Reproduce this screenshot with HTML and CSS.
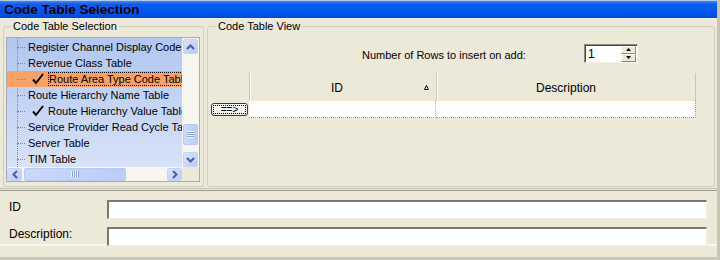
FILE: index.html
```html
<!DOCTYPE html>
<html lang="en">
<head>
    <meta charset="UTF-8">
    <title>Code Table Selection</title>
    <link rel="stylesheet" href="styles.css">
</head>
<body>
<div class="window">
    <div class="titlebar">Code Table Selection</div>

    <div class="main">
        <!-- left: table picker -->
        <fieldset class="group group-left">
            <legend>Code Table Selection</legend>
            <div class="tree">
                <div class="tree-body">
                    <ul class="tree-items">
                        <li>Register Channel Display Code Table</li>
                        <li>Revenue Class Table</li>
                        <li class="checked selected"><span class="check"><svg width="12" height="12" viewBox="0 0 12 12"><path d="M1 6.5 L4 10 L11 1" fill="none" stroke="#000" stroke-width="2"/></svg></span><span class="focus">Route Area Type Code Table</span></li>
                        <li>Route Hierarchy Name Table</li>
                        <li class="checked"><span class="check"><svg width="12" height="12" viewBox="0 0 12 12"><path d="M1 6.5 L4 10 L11 1" fill="none" stroke="#000" stroke-width="2"/></svg></span><span>Route Hierarchy Value Table</span></li>
                        <li>Service Provider Read Cycle Table</li>
                        <li>Server Table</li>
                        <li>TIM Table</li>
                    </ul>
                    <div class="vscroll">
                        <div class="sb-btn"><svg width="9" height="6" viewBox="0 0 9 6"><path d="M1 5 L4.5 1.5 L8 5" fill="none" stroke="#4d6185" stroke-width="2"/></svg></div>
                        <div class="sb-track sb-track-v">
                            <div class="sb-thumb sb-thumb-v"><span class="grip grip-v"></span></div>
                        </div>
                        <div class="sb-btn"><svg width="9" height="6" viewBox="0 0 9 6"><path d="M1 1 L4.5 4.5 L8 1" fill="none" stroke="#4d6185" stroke-width="2"/></svg></div>
                    </div>
                </div>
                <div class="hscroll-row">
                    <div class="hscroll">
                        <div class="sb-btn"><svg width="6" height="9" viewBox="0 0 6 9"><path d="M5 1 L1.5 4.5 L5 8" fill="none" stroke="#4d6185" stroke-width="2"/></svg></div>
                        <div class="sb-track sb-track-h">
                            <div class="sb-thumb sb-thumb-h"><span class="grip grip-h"></span></div>
                        </div>
                        <div class="sb-btn"><svg width="6" height="9" viewBox="0 0 6 9"><path d="M1 1 L4.5 4.5 L1 8" fill="none" stroke="#4d6185" stroke-width="2"/></svg></div>
                    </div>
                    <div class="sb-corner"></div>
                </div>
            </div>
        </fieldset>

        <!-- right: table rows -->
        <fieldset class="group group-right">
            <legend>Code Table View</legend>
            <div class="rows-insert">
                <span class="rows-label">Number of Rows to insert on add:</span>
                <div class="spinner">
                    <span class="spin-value">1</span>
                    <div class="spin-btns">
                        <div class="spin-btn"><svg width="5" height="3" viewBox="0 0 5 3"><path d="M0 3 L2.5 0 L5 3 Z" fill="#000"/></svg></div>
                        <div class="spin-btn"><svg width="5" height="3" viewBox="0 0 5 3"><path d="M0 0 L2.5 3 L5 0 Z" fill="#000"/></svg></div>
                    </div>
                </div>
            </div>
            <div class="grid">
                <div class="grid-head">
                    <div class="cell cell-rowhead"></div>
                    <div class="cell cell-id">ID <svg class="sort" width="5" height="5" viewBox="0 0 5 5"><path d="M2.5 0.5 L4.5 4.5 L0.5 4.5 Z" fill="none" stroke="#000" stroke-width="1"/></svg></div>
                    <div class="cell cell-desc">Description</div>
                </div>
                <div class="grid-row">
                    <div class="cell cell-rowhead"><button class="add-btn"><span>==&gt;</span></button></div>
                    <div class="cell cell-id"></div>
                    <div class="cell cell-desc"></div>
                </div>
            </div>
        </fieldset>
    </div>

    <!-- edit fields -->
    <div class="details">
        <label for="idInput">ID</label>
        <input type="text" id="idInput">
        <label for="descInput">Description:</label>
        <input type="text" id="descInput">
    </div>
</div>
</body>
</html>
```

FILE: styles.css
```css
body {
    margin: 0;
    padding: 0;
    font-family: "Liberation Sans", Arial, sans-serif;
    font-size: 11px;
    color: #000;
    background-color: #ece9d8;
}

.window {
    width: 720px;
    height: 260px;
    box-sizing: border-box;
    background-color: #ece9d8;
    border-right: 3px solid #c9c6b8;
    border-bottom: 3px solid #c9c6b8;
    overflow: hidden;
}

.titlebar {
    height: 17px;
    line-height: 17px;
    border-top: 1px solid #b9c8e6;
    border-bottom: 1px solid #f4f2e8;
    padding-left: 4px;
    font-size: 13.5px;
    font-weight: bold;
    background: linear-gradient(to bottom, #3c8af8 0, #0a5ff2 3px, #0058ee 60%, #0049d8 100%);
}

.main {
    display: flex;
    gap: 3px;
    padding: 1px 2px 0 3px;
    height: 167px;
}

.group {
    margin: 0;
    border: 1px solid #d0d0bf;
    border-radius: 3px;
    padding: 0 3px 2px 2px;
    min-width: 0;
}

.group legend {
    margin-left: 5px;
    padding: 0 2px;
    line-height: 13px;
}

.group-left {
    width: 194px;
    flex: none;
}

.group-right {
    flex: 1;
    padding-left: 3px;
}

/* tree list */
.tree {
    margin-top: 4px;
    border: 1px solid #a5acb5;
    width: 192px;
}

.tree-body {
    display: flex;
    height: 129px;
}

.tree-items {
    list-style: none;
    margin: 0;
    padding: 1px 0 0 0;
    width: 175px;
    overflow: hidden;
    background: linear-gradient(to bottom, #b1c6f1, #d8e2f8);
    background-image:
        linear-gradient(to bottom, #b1c6f1, #d8e2f8);
    position: relative;
}

.tree-items::before {
    content: "";
    position: absolute;
    left: 10px;
    top: 0;
    bottom: 0;
    border-left: 1px dotted #7c89a0;
}

.tree-items li {
    position: relative;
    height: 16px;
    line-height: 16px;
    padding-left: 21px;
    white-space: nowrap;
}

.tree-items li::before {
    content: "";
    position: absolute;
    left: 10px;
    top: 8px;
    width: 8px;
    border-top: 1px dotted #7c89a0;
}

.tree-items li.checked {
    display: flex;
    align-items: center;
    padding-left: 25px;
}

.check {
    display: flex;
    width: 14px;
    margin-right: 4px;
}

.tree-items li.selected {
    background-color: #f7a262;
}

.focus {
    outline: 1px dotted #000;
    outline-offset: -1px;
    padding: 0 2px 0 1px;
    line-height: 14px;
}

/* scrollbars */
.vscroll {
    width: 17px;
    display: flex;
    flex-direction: column;
    align-items: center;
    background-color: #f6f5f0;
}

.sb-btn {
    width: 15px;
    height: 15px;
    box-sizing: border-box;
    border: 1px solid #c3d3fd;
    border-radius: 2px;
    background: linear-gradient(to bottom right, #d7e2fd, #b9cbf6);
    display: flex;
    align-items: center;
    justify-content: center;
    flex: none;
}

.vscroll .sb-btn {
    margin-top: 1px;
}

.sb-track {
    flex: 1;
    display: flex;
}

.sb-track-v {
    flex-direction: column;
    align-items: center;
    justify-content: flex-end;
    padding-bottom: 6px;
}

.sb-thumb {
    box-sizing: border-box;
    border: 1px solid #b7c9f4;
    border-radius: 2px;
    background: linear-gradient(to right, #cad8fb, #bccdf6);
    display: flex;
    align-items: center;
    justify-content: center;
}

.sb-thumb-v {
    width: 15px;
    height: 21px;
}

.grip-v {
    width: 7px;
    height: 7px;
    background: repeating-linear-gradient(to bottom, #eef3fe 0 1px, #8ca2d6 1px 2px);
}

.hscroll-row {
    display: flex;
    height: 14px;
}

.hscroll {
    width: 175px;
    display: flex;
    align-items: center;
    background-color: #f6f5f0;
}

.hscroll .sb-btn {
    height: 13px;
}

.sb-track-h {
    padding: 0 2px;
    height: 13px;
}

.sb-thumb-h {
    width: 102px;
    height: 13px;
}

.grip-h {
    width: 8px;
    height: 6px;
    background: repeating-linear-gradient(to right, #eef3fe 0 1px, #8ca2d6 1px 2px);
}

.sb-corner {
    width: 17px;
    background-color: #ece9d8;
}

/* right side */
.rows-insert {
    display: flex;
    align-items: center;
    margin-top: 11px;
}

.rows-label {
    display: inline-block;
    width: 222px;
    padding-left: 151px;
    padding-top: 2px;
}

.spinner {
    width: 54px;
    height: 19px;
    box-sizing: border-box;
    background-color: #fff;
    border-top: 1px solid #8d8b80;
    border-left: 1px solid #8d8b80;
    border-right: 1px solid #f4f2ea;
    border-bottom: 1px solid #f4f2ea;
    box-shadow: inset 1px 1px #484740;
    display: flex;
    align-items: center;
}

.spin-value {
    flex: 1;
    padding-left: 3px;
    font-size: 12px;
}

.spin-btns {
    display: flex;
    flex-direction: column;
    margin-right: 1px;
}

.spin-btn {
    width: 15px;
    height: 8px;
    box-sizing: border-box;
    background-color: #ece9d8;
    border: 1px solid;
    border-color: #fff #8d8b80 #8d8b80 #fff;
    display: flex;
    align-items: center;
    justify-content: center;
}

.grid {
    margin-top: 10px;
    width: 485px;
}

.grid-head,
.grid-row {
    display: flex;
}

.grid-head {
    height: 28px;
}

.grid-row {
    height: 17px;
}

.cell {
    box-sizing: border-box;
    display: flex;
    align-items: center;
    justify-content: center;
}

.cell-rowhead {
    width: 38px;
}

.cell-id {
    width: 187px;
    position: relative;
}

.cell-desc {
    width: 260px;
}

.grid-head .cell-id,
.grid-head .cell-desc {
    border-left: 1px solid #c9c6b6;
    box-shadow: inset 1px 0 #fff;
    font-size: 12px;
    padding-top: 1px;
}

.grid-head .cell-id {
    padding-right: 12px;
}

.grid-head .cell-desc {
    border-right: 1px solid #c9c6b6;
}

.sort {
    position: absolute;
    right: 7px;
    top: 12px;
}

.grid-row .cell-id,
.grid-row .cell-desc {
    background-color: #fff;
    border-bottom: 1px dotted #9c9a90;
}

.grid-row .cell-id {
    border-right: 1px dotted #b8b6ac;
}

.grid-row .cell-desc {
    border-right: 1px dotted #9c9a90;
}

.grid-row .cell-rowhead {
    justify-content: flex-start;
}

.add-btn {
    width: 37px;
    height: 13px;
    margin: 0;
    padding: 1px;
    border: 1px solid #1f3f76;
    border-radius: 3px;
    background: linear-gradient(to bottom, #ffffff, #ecebe4);
    font-family: "Liberation Sans", Arial, sans-serif;
    font-size: 10px;
    display: flex;
}

.add-btn span {
    flex: 1;
    outline: 1px dotted #000;
    outline-offset: -1px;
    line-height: 9px;
}

/* bottom edit fields */
.details {
    margin-top: 1px;
    border-top: 1px solid #c4c1b2;
    box-shadow: 0 -2px 0 #f7f6ef inset;
    display: grid;
    grid-template-columns: 98px 600px;
    row-gap: 8px;
    padding: 11px 0 0 9px;
    position: relative;
}

.details::before {
    content: "";
    position: absolute;
    left: 0;
    right: 0;
    top: 1px;
    border-top: 1px solid #9e9b8c;
}

.details label {
    font-size: 12px;
    line-height: 14px;
    padding-top: 0;
}

.details input {
    width: 600px;
    height: 19px;
    box-sizing: border-box;
    margin: 0;
    padding: 0 3px;
    background-color: #fff;
    border-top: 2px solid #7b796e;
    border-left: 2px solid #7b796e;
    border-right: 1px solid #f1efe4;
    border-bottom: 1px solid #f1efe4;
    font-family: "Liberation Sans", Arial, sans-serif;
    font-size: 11px;
}
```
